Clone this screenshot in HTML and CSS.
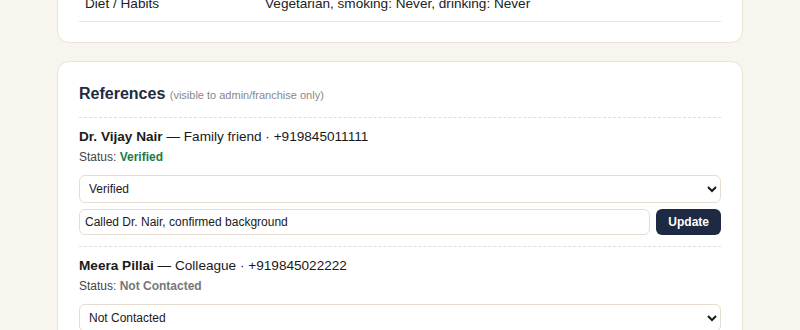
FILE: index.html
```html
<!DOCTYPE html>
<html lang="en">
<head>
  <meta charset="UTF-8">
  <meta name="viewport" content="width=device-width, initial-scale=1.0">
  <title>Profile - References</title>
  <link rel="stylesheet" href="styles.css">
</head>
<body>
  <div class="page">

    <!-- PERSONAL DETAILS (scrolled, only last row shows) -->
    <div class="card details-card">
      <table class="details">
        <tr>
          <td class="key">Diet / Habits</td>
          <td>Vegetarian, smoking: Never, drinking: Never</td>
        </tr>
      </table>
    </div>

    <!-- REFERENCES -->
    <div class="card refs-card">
      <div class="card-head">
        <h2>References</h2>
        <span class="hint">(visible to admin/franchise only)</span>
      </div>

      <div class="ref">
        <div class="ref-name"><b>Dr. Vijay Nair</b> — Family friend · +919845011111</div>
        <div class="ref-status">Status: <span class="st-verified">Verified</span></div>
        <select class="ref-select">
          <option>Not Contacted</option>
          <option selected>Verified</option>
          <option>Unreachable</option>
        </select>
        <div class="ref-row">
          <input type="text" class="ref-note" value="Called Dr. Nair, confirmed background">
          <button class="btn">Update</button>
        </div>
      </div>

      <div class="ref">
        <div class="ref-name"><b>Meera Pillai</b> — Colleague · +919845022222</div>
        <div class="ref-status">Status: <span class="st-none">Not Contacted</span></div>
        <select class="ref-select">
          <option selected>Not Contacted</option>
          <option>Verified</option>
          <option>Unreachable</option>
        </select>
        <div class="ref-row">
          <input type="text" class="ref-note" placeholder="Notes">
          <button class="btn">Update</button>
        </div>
      </div>
    </div>

  </div>
</body>
</html>
```

FILE: styles.css
```css
body {
  margin: 0;
  background: #f8f4ee;
  font-family: "Liberation Sans", Arial, sans-serif;
  color: #1a1a1a;
}

.page {
  max-width: 686px;
  margin: 0 auto;
  display: flex;
  flex-direction: column;
  gap: 18px;
}

.card {
  background: #fff;
  border: 1px solid #ebe3d7;
  border-radius: 12px;
  padding: 21px 21px;
}

/* page is scrolled down a bit */
.details-card {
  margin-top: -35px;
  padding-top: 20px;
  padding-bottom: 20px;
}

.refs-card {
  padding-top: 23px;
}

.details {
  width: 100%;
  border-collapse: collapse;
  font-size: 13.6px;
}

.details td {
  padding: 10px 6px;
  border-bottom: 1px solid #ebe3d7;
  color: #222;
}

.details .key {
  width: 168px;
}

.card-head {
  padding-bottom: 14px;
  border-bottom: 1px dashed #e6ddd0;
}

.card-head h2 {
  display: inline;
  margin: 0;
  font-size: 16px;
  color: #1f2a44;
}

.hint {
  font-size: 11px;
  color: #888;
}

.ref {
  padding: 11px 0;
  border-bottom: 1px dashed #e6ddd0;
}

.ref-name {
  font-size: 13.6px;
  color: #1a1a1a;
}

.ref-status {
  font-size: 12px;
  color: #444;
  margin-top: 6px;
}

.st-verified {
  color: #1e7a44;
  font-weight: bold;
}

.st-none {
  color: #777;
  font-weight: bold;
}

.ref-select {
  display: block;
  width: 100%;
  box-sizing: border-box;
  height: 28px;
  margin-top: 11px;
  padding: 0 5px;
  font-family: inherit;
  font-size: 12px;
  color: #1a1a1a;
  background: #fff;
  border: 1px solid #e6ddd0;
  border-radius: 6px;
}

.ref-row {
  display: flex;
  gap: 6px;
  margin-top: 6px;
}

.ref-note {
  flex: 1;
  box-sizing: border-box;
  height: 26px;
  padding: 0 5px;
  font-family: inherit;
  font-size: 12px;
  color: #1a1a1a;
  border: 1px solid #e6ddd0;
  border-radius: 6px;
}

.btn {
  height: 26px;
  padding: 0 12px;
  border: none;
  border-radius: 6px;
  background: #1e2a44;
  color: #fff;
  font-family: inherit;
  font-size: 12px;
  font-weight: bold;
  cursor: pointer;
}
```
